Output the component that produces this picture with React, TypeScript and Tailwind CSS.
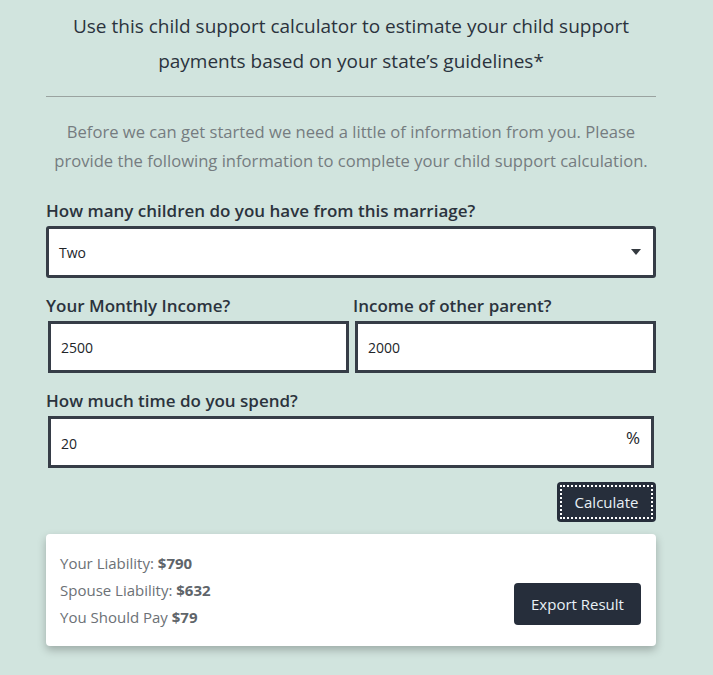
export default function App() {
  return (
    <div className="min-h-screen w-full bg-[#d1e4de] font-['Open_Sans',sans-serif] text-[#212529]">
      <div className="ml-[46px] w-[610px] pt-[9px]">
        {/* intro */}
        <h1 className="text-center text-[19px] leading-[35px] text-[#2b333d]">
          Use this child support calculator to estimate your child support payments based on your state’s guidelines*
        </h1>
        <hr className="mt-[17px] border-t border-[#9aa3a0]" />
        <p className="mt-[20px] text-center text-[16.6px] leading-[29px] text-[#757c80]">
          Before we can get started we need a little of information from you. Please provide the following information to complete your child support calculation.
        </p>

        {/* children */}
        <label className="mt-[24px] block text-[17px] font-semibold leading-[24px] text-[#2b333d]">
          How many children do you have from this marriage?
        </label>
        <div className="relative mt-[3px] flex h-[52px] items-center rounded-[3px] border-[3px] border-[#363d47] bg-white pl-[10px]">
          <span className="text-[14px] text-[#212529]">Two</span>
          <svg className="absolute right-[12px] top-[20px]" width="10" height="6" viewBox="0 0 10 6">
            <path d="M0 0h10L5 6z" fill="#343a40" />
          </svg>
        </div>

        {/* incomes */}
        <div className="mt-[16px] grid grid-cols-2 gap-[4px]">
          <div>
            <label className="block text-[17px] font-semibold leading-[24px] text-[#2b333d]">Your Monthly Income?</label>
            <div className="ml-[2px] mt-[3px] flex h-[52px] items-center border-[3px] border-[#363d47] bg-white pl-[10px]">
              <span className="text-[14px]">2500</span>
            </div>
          </div>
          <div>
            <label className="block text-[17px] font-semibold leading-[24px] text-[#2b333d]">Income of other parent?</label>
            <div className="ml-[2px] mt-[3px] flex h-[52px] items-center border-[3px] border-[#363d47] bg-white pl-[10px]">
              <span className="text-[14px]">2000</span>
            </div>
          </div>
        </div>

        {/* time */}
        <label className="mt-[16px] block text-[17px] font-semibold leading-[24px] text-[#2b333d]">
          How much time do you spend?
        </label>
        <div className="ml-[2px] mr-[2px] mt-[3px] flex h-[52px] items-center justify-between border-[3px] border-[#363d47] bg-white pl-[10px] pr-[11px]">
          <span className="mt-[2px] text-[14px]">20</span>
          <span className="-mt-[8px] text-[17px] text-[#212529]">%</span>
        </div>

        <div className="mt-[14px] flex justify-end">
          <button className="flex h-[40px] w-[99px] items-center justify-center rounded-[4px] bg-[#262e3b] p-[3px]">
            <span className="flex h-full w-full items-center justify-center border-2 border-dotted border-white text-[15px] text-[#e9f1f6]">
              Calculate
            </span>
          </button>
        </div>

        {/* result */}
        <div className="mt-[12px] flex h-[112px] items-center justify-between rounded-[4px] bg-white pl-[14px] pr-[15px] shadow-[0_4px_8px_rgba(0,0,0,0.25)]">
          <div className="text-[15px] leading-[27px] text-[#6c7176]">
            <div>Your Liability: <b className="font-bold text-[#5f656a]">$790</b></div>
            <div>Spouse Liability: <b className="font-bold text-[#5f656a]">$632</b></div>
            <div>You Should Pay <b className="font-bold text-[#5f656a]">$79</b></div>
          </div>
          <button className="mt-[28px] h-[42px] w-[127px] rounded-[4px] bg-[#262e3b] text-[15px] text-[#e9f1f6]">
            Export Result
          </button>
        </div>
      </div>
    </div>
  );
}
